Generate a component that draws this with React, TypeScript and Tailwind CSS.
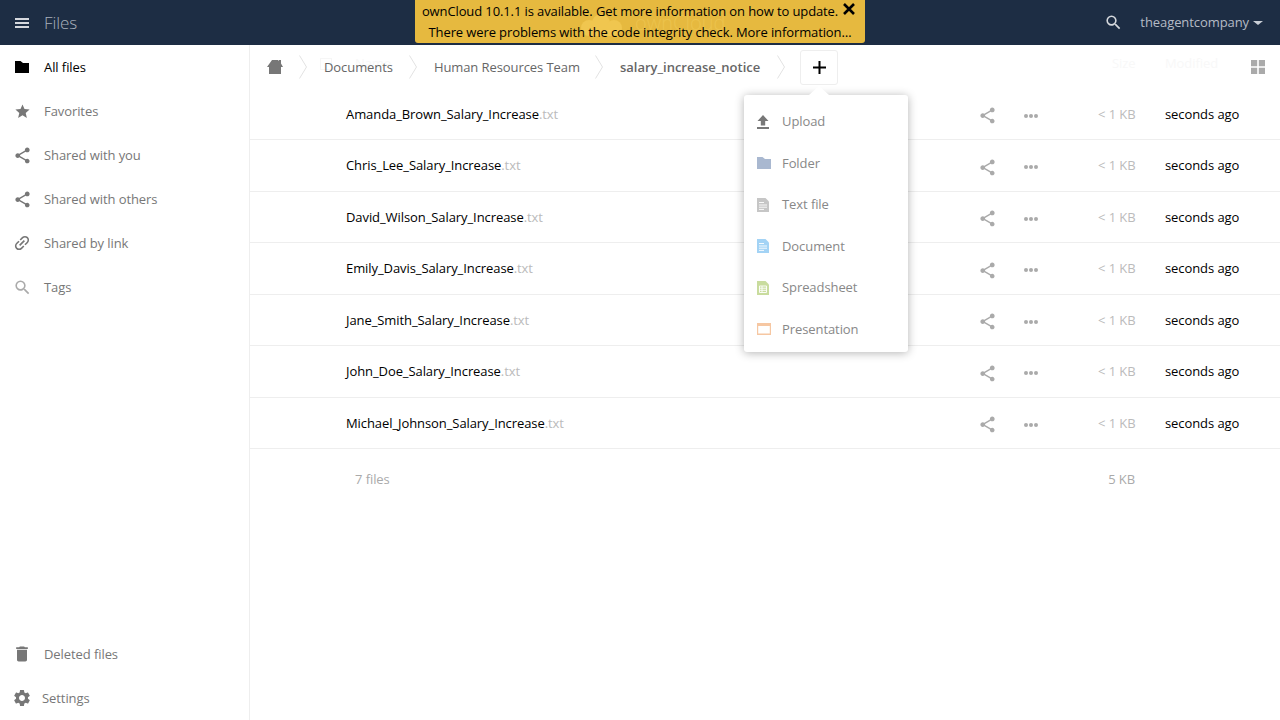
import { MdStar, MdShare, MdLink, MdSearch, MdDelete, MdSettings } from 'react-icons/md'
import type { ReactNode } from 'react'

const files = [
  'Amanda_Brown_Salary_Increase',
  'Chris_Lee_Salary_Increase',
  'David_Wilson_Salary_Increase',
  'Emily_Davis_Salary_Increase',
  'Jane_Smith_Salary_Increase',
  'John_Doe_Salary_Increase',
  'Michael_Johnson_Salary_Increase',
]

function FolderIcon({ className }: { className: string }) {
  return (
    <svg viewBox="0 0 14 12" className={className} fill="currentColor">
      <path d="M0 0h5.5l2.5 2h6v10H0z" />
    </svg>
  )
}

function FileIcon({ color, lines = 'text' }: { color: string; lines?: 'text' | 'grid' }) {
  return (
    <svg viewBox="0 0 12 14" className="w-3 h-3.5" fill={color}>
      <path d="M0 0h8.5L12 3.5V14H0z" />
      {lines === 'text' ? (
        <path d="M2 4.5h5M2 7h8M2 9.2h8M2 11.4h5" stroke="#fff" strokeWidth="0.9" fill="none" />
      ) : (
        <path d="M2.5 5h7v6.5h-7zM2.5 7.2h7M2.5 9.3h7M5 5v6.5" stroke="#fff" strokeWidth="0.9" fill="none" />
      )}
    </svg>
  )
}

function Chevron() {
  return (
    <svg viewBox="0 0 8 24" className="w-2 h-6 shrink-0 mt-px" fill="none" stroke="#e2e2e2">
      <path d="M.5 .5l7 11.5-7 11.5" />
    </svg>
  )
}

function NavItem({ icon, label, active }: { icon: ReactNode; label: string; active?: boolean }) {
  return (
    <div className={`h-11 flex items-center ${active ? 'text-black' : 'text-[#777]'}`}>
      <span className="w-11 flex justify-center">{icon}</span>
      <span className="mt-0.5">{label}</span>
    </div>
  )
}

function MenuItem({ icon, label }: { icon: ReactNode; label: string }) {
  return (
    <div className="h-[41.5px] flex items-center text-[#888]">
      <span className="w-[38px] pl-[13px] flex items-center">{icon}</span>
      <span>{label}</span>
    </div>
  )
}

function FileRow({ name }: { name: string }) {
  return (
    <div className="h-[51.5px] flex items-center border-b border-[#eee] pl-24 pr-[41px] text-black">
      <div className="flex-1 mt-[1.5px]">
        {name}
        <span className="text-[#bbb]">.txt</span>
      </div>
      <MdShare className="w-[19px] h-[19px] text-[#aaa] mt-1" />
      <svg viewBox="0 0 14 4" className="w-3.5 h-1 ml-[27px] mr-[60px] mt-1" fill="#aaa">
        <circle cx="2" cy="2" r="2" />
        <circle cx="7" cy="2" r="2" />
        <circle cx="12" cy="2" r="2" />
      </svg>
      <div className="w-[37px] whitespace-nowrap mt-[1.5px] text-[#bbb]">&lt; 1 KB</div>
      <div className="w-[74px] ml-[30px] whitespace-nowrap mt-[1.5px]">seconds ago</div>
    </div>
  )
}

export default function App() {
  return (
    <div className="relative h-[720px] w-[1280px] overflow-hidden bg-white text-[13px] tracking-[-0.08px] font-['Open_Sans',sans-serif]">
      {/* Top bar */}
      <header className="h-[45px] bg-[#1d2d44] flex items-center text-[#c9ced6]">
        <svg viewBox="0 0 14 10" className="w-3.5 h-2.5 ml-[15px]" fill="#d5d8de">
          <path d="M0 0h14v2H0zM0 4h14v2H0zM0 8h14v2H0z" />
        </svg>
        <span className="ml-[15px] text-[17px] font-light text-[#a9b0bb]">Files</span>
        <div className="flex-1" />
        <MdSearch className="w-[19px] h-[19px] text-[#d5d8dd]" />
        <span className="ml-[17px] text-[#b5bbc5]">theagentcompany</span>
        <span className="ml-1 mr-[17px] border-x-[5px] border-t-[4px] border-x-transparent border-t-[#c9ced6]" />
      </header>

      {/* Update notification */}
      <div className="absolute left-[415px] top-0 w-[450px] h-[43px] rounded-b-[3px] bg-[#e6b93f] text-black text-center leading-[20px] tracking-[-0.11px] z-10">
        {/* header logo showing through the banner */}
        <svg viewBox="0 0 48 24" className="absolute left-[162px] top-[14px] w-12 h-6" fill="#f0c64f">
          <circle cx="24" cy="9" r="9" />
          <circle cx="12" cy="14" r="8" />
          <circle cx="37" cy="14" r="8" />
          <path d="M12 16h25v6H12z" />
        </svg>
        <span className="absolute left-[220px] top-[11px] text-[20px] leading-[24px] tracking-normal font-light text-[#ecc34d]">ownCloud</span>
        <div className="relative pr-[20px] pt-px">ownCloud 10.1.1 is available. Get more information on how to update.</div>
        <div className="relative pt-px">There were problems with the code integrity check. More information…</div>
        <svg viewBox="0 0 12 12" className="absolute right-[10px] top-[3px] w-3 h-3" fill="none" stroke="#000" strokeWidth="2.6">
          <path d="M1 1l10 10M11 1L1 11" />
        </svg>
      </div>

      <div className="flex h-[675px]">
        {/* Sidebar */}
        <aside className="w-[250px] shrink-0 border-r border-[#eee] flex flex-col">
          <NavItem active label="All files" icon={<FolderIcon className="w-3.5 h-3" />} />
          <NavItem label="Favorites" icon={<MdStar className="w-[17px] h-[17px]" />} />
          <NavItem label="Shared with you" icon={<MdShare className="w-[19px] h-[19px]" />} />
          <NavItem label="Shared with others" icon={<MdShare className="w-[19px] h-[19px]" />} />
          <NavItem label="Shared by link" icon={<MdLink className="w-5 h-5 -rotate-45" />} />
          <NavItem label="Tags" icon={<MdSearch className="w-[19px] h-[19px] text-[#aaa]" />} />
          <div className="flex-1" />
          <NavItem label="Deleted files" icon={<MdDelete className="w-5 h-5" />} />
          <div className="h-11 flex items-center text-[#777]">
            <span className="w-[42px] flex justify-center pl-px">
              <MdSettings className="w-5 h-5" />
            </span>
            <span className="mt-0.5">Settings</span>
          </div>
        </aside>

        {/* Main */}
        <main className="relative flex-1 flex flex-col">
          {/* faint table head under the breadcrumb */}
          <div className="absolute left-0 right-0 top-0 h-[36px] text-[#f8f8f8]">
            <span className="absolute left-[70px] top-[13px] w-3 h-3 border border-[#f6f6f6]" />
            <span className="absolute left-[105px] top-[9px]">Name</span>
            <span className="absolute left-[862px] top-[9px]">Size</span>
            <span className="absolute left-[915px] top-[9px]">Modified</span>
          </div>
          <div className="relative h-[43.5px] flex items-center text-[#666] pl-[17px]">
            <svg viewBox="0 0 16 14" className="w-4 h-3.5 mr-4" fill="#777">
              <path d="M5 0h6l1 1V0h2v3.5L16 7h-2v7H2V7H0z" />
            </svg>
            <Chevron />
            <span className="ml-[17px] mt-0.5">Documents</span>
            <span className="ml-4"><Chevron /></span>
            <span className="ml-[17px] mt-0.5">Human Resources Team</span>
            <span className="ml-[15px]"><Chevron /></span>
            <span className="ml-[17px] mt-0.5 font-semibold tracking-normal">salary_increase_notice</span>
            <span className="ml-[17px]"><Chevron /></span>
            <div className="ml-[15px] w-[38px] h-[35px] mt-px border border-[#eee] rounded-[3px] flex items-center justify-center">
              <svg viewBox="0 0 13 13" className="w-[13px] h-[13px]" fill="#000">
                <path d="M5.5 0h2v5.5H13v2H7.5V13h-2V7.5H0v-2h5.5z" />
              </svg>
            </div>
            <div className="flex-1" />
            <svg viewBox="0 0 14 14" className="w-3.5 h-3.5 mr-[15px] mt-px" fill="#aaa">
              <path d="M0 0h6.2v6.2H0zM7.8 0H14v6.2H7.8zM0 7.8h6.2V14H0zM7.8 7.8H14V14H7.8z" />
            </svg>
          </div>
          {files.map((name) => (
            <FileRow key={name} name={name} />
          ))}
          <div className="h-[62px] flex items-center text-[#aaa] pl-[105px] pr-[145px]">
            <span className="flex-1">7 files</span>
            <span>5 KB</span>
          </div>
        </main>
      </div>

      {/* New file menu */}
      <div className="absolute left-[744px] top-[95px] w-[164px] h-[257px] bg-white rounded-[3px] shadow-[0_1px_10px_rgba(0,0,0,0.3)] pt-[6px]">
        <div className="absolute left-[65px] -top-[9px] w-0 h-0 border-x-[10px] border-b-[9px] border-x-transparent border-b-white" />
        <MenuItem
          label="Upload"
          icon={
            <svg viewBox="0 0 12 14" className="w-3 h-3.5" fill="#777">
              <path d="M6 0l5.5 6H8.2v4.5H3.8V6H.5zM0 12h12v2H0z" />
            </svg>
          }
        />
        <MenuItem label="Folder" icon={<FolderIcon className="w-3.5 h-3 text-[#a9b8d0]" />} />
        <MenuItem label="Text file" icon={<FileIcon color="#c6c6c6" />} />
        <MenuItem label="Document" icon={<FileIcon color="#a3d3f5" />} />
        <MenuItem label="Spreadsheet" icon={<FileIcon color="#c9dc9e" lines="grid" />} />
        <MenuItem
          label="Presentation"
          icon={
            <svg viewBox="0 0 14 12" className="w-3.5 h-3" fill="#f6c7a2">
              <path fillRule="evenodd" d="M0 0h14v12H0zM1.2 3v7.5h11.6V3z" />
            </svg>
          }
        />
      </div>
    </div>
  )
}
